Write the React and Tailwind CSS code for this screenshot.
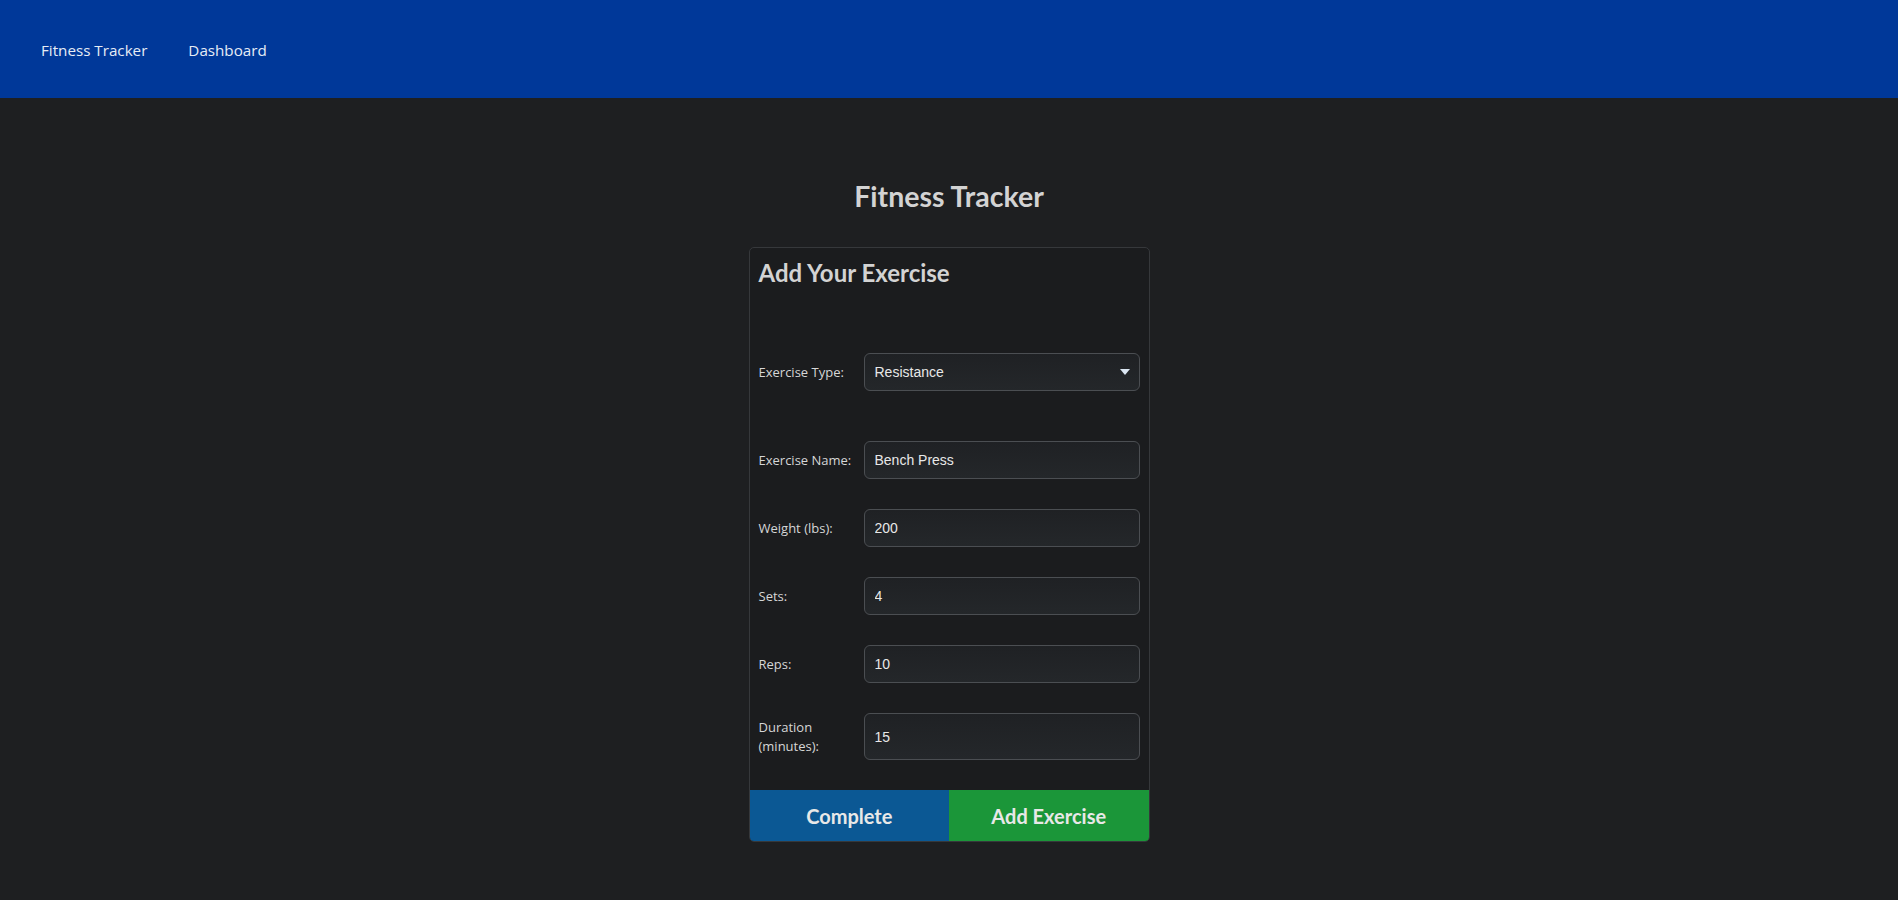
import React from "react";

const labelCls = "w-[105px] shrink-0 text-[13px] leading-[19px] text-[#d6d6d6] [font-family:'Open_Sans','Noto_Sans',sans-serif]";
const inputCls = "flex-1 min-w-0 h-[38px] rounded-[6px] border border-[#4b4e52] bg-gradient-to-b from-[#1f2124] to-[#24272a] px-[10px] text-[14px] text-[#e8e8e8] outline-none [font-family:'Liberation_Sans',Arial,sans-serif]";

function Row({ label, value, className = "", inputClass = "" }) {
  return (
    <div className={"flex items-center " + className}>
      <label className={labelCls}>{label}</label>
      <input className={inputCls + " " + inputClass} defaultValue={value} />
    </div>
  );
}

export default function App() {
  return (
    <div className="min-h-[900px] bg-[#1e1f21]">
      <nav className="flex h-[98px] items-center bg-[#003899] pl-[41px] pt-[2px] text-[15.2px] text-[#e6ecf5] [font-family:'Open_Sans','Noto_Sans',sans-serif]">
        <span>Fitness Tracker</span>
        <span className="ml-[41px]">Dashboard</span>
      </nav>
      <div className="flex flex-col items-center">
        <h1 className="mt-[77px] text-[28.5px] leading-[42px] font-bold text-[#d3d3d3] [font-family:Lato,sans-serif]">
          Fitness Tracker
        </h1>
        <div className="mt-[30px] w-[401px] overflow-hidden rounded-[5px] border border-[#36383b] bg-[#1b1c1e]">
          <div className="px-[9px] pt-[10px] pb-[30px]">
            <h2 className="text-[24px] leading-[30px] font-bold text-[#d3d3d3] [font-family:Lato,sans-serif]">
              Add Your Exercise
            </h2>
            <div className="mt-[65px] flex items-center">
              <label className={labelCls}>Exercise Type:</label>
              <div className={inputCls + " flex items-center justify-between"}>
                <span>Resistance</span>
                <svg width="10" height="6" viewBox="0 0 10 6" className="mr-[-1px]">
                  <path d="M0 0 L10 0 L5 6 Z" fill="#dbe6f2" />
                </svg>
              </div>
            </div>
            <Row className="mt-[50px]" label="Exercise Name:" value="Bench Press" />
            <Row className="mt-[30px]" label="Weight (lbs):" value="200" />
            <Row className="mt-[30px]" label="Sets:" value="4" />
            <Row className="mt-[30px]" label="Reps:" value="10" />
            <Row
              className="mt-[30px]"
              label={<>Duration<br />(minutes):</>}
              value="15"
              inputClass="h-[47px]"
            />
          </div>
          <div className="flex h-[51px] text-[20px] font-bold text-[#e8e8e8] [font-family:Lato,sans-serif]">
            <button className="flex-1 bg-[#0b5894]">Complete</button>
            <button className="flex-1 bg-[#1b9639]">Add Exercise</button>
          </div>
        </div>
      </div>
    </div>
  );
}
